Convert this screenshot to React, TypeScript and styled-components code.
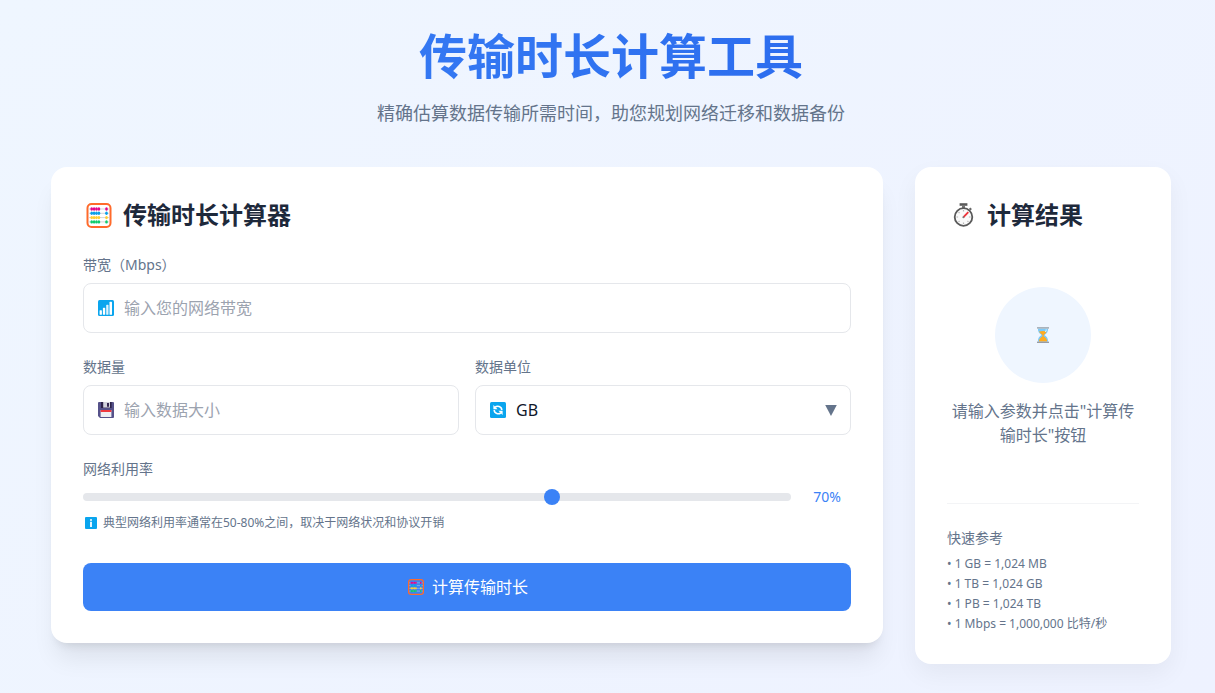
import React, { useState } from "react";
import styled, { createGlobalStyle } from "styled-components";

const GlobalStyle = createGlobalStyle`
  *, *::before, *::after { box-sizing: border-box; }
  body {
    margin: 0;
    font-family: "Noto Sans", "Noto Sans CJK SC", sans-serif;
    font-size: 16px;
    line-height: 24px;
    color: #1e293b;
  }
  h1, h2, h3, p, ul { margin: 0; padding: 0; }
  button, input, select { font: inherit; margin: 0; }
`;

const Page = styled.div`
  min-height: 100vh;
  padding: 32px 44px 24px 51px;
  background: linear-gradient(135deg, #eff6ff 0%, #eef2ff 100%);
`;

const Header = styled.header`
  text-align: center;
  margin-bottom: 40px;
`;

const Title = styled.h1`
  font-size: 48px;
  line-height: 48px;
  font-weight: 700;
  padding-bottom: 19px;
  color: transparent;
  background: linear-gradient(90deg, #3b82f6, #2563eb);
  background-clip: text;
  -webkit-background-clip: text;
`;

const Subtitle = styled.p`
  font-size: 18px;
  line-height: 28px;
  color: #64748b;
`;

const Columns = styled.main`
  display: grid;
  grid-template-columns: repeat(4, minmax(0, 1fr));
  gap: 32px;
  align-items: start;
  @media (max-width: 900px) {
    grid-template-columns: minmax(0, 1fr);
  }
`;

const Card = styled.section<{ $wide?: boolean }>`
  grid-column: ${(p) => (p.$wide ? "span 3" : "span 1")};
  padding: 32px;
  border-radius: 16px;
  background: #fff;
  box-shadow: ${(p) =>
    p.$wide
      ? "0 20px 25px -5px rgba(0,0,0,0.08), 0 8px 10px -6px rgba(0,0,0,0.1)"
      : "0 10px 25px rgba(0,0,0,0.05)"};
  @media (max-width: 900px) {
    grid-column: span 1;
  }
`;

const CardTitle = styled.h2`
  display: flex;
  align-items: center;
  gap: 8px;
  margin-bottom: 24px;
  font-size: 24px;
  line-height: 32px;
  font-weight: 700;
  svg { flex: none; }
`;

const Form = styled.form`
  display: grid;
  gap: 24px;
`;

const FieldRow = styled.div`
  display: grid;
  grid-template-columns: 1fr 1fr;
  gap: 16px;
`;

const Field = styled.div`
  display: grid;
  gap: 8px;
`;

const Label = styled.label`
  font-size: 14px;
  line-height: 20px;
  color: #64748b;
`;

const Control = styled.div`
  position: relative;
`;

const ControlIcon = styled.span<{ $end?: boolean }>`
  position: absolute;
  top: 0;
  bottom: 0;
  ${(p) => (p.$end ? "right: 14px;" : "left: 15px;")}
  display: flex;
  align-items: center;
  pointer-events: none;
`;

const TextInput = styled.input`
  display: block;
  width: 100%;
  height: 50px;
  padding: 0 16px 0 40px;
  border: 1px solid #e5e7eb;
  border-radius: 8px;
  background: #fff;
  color: #0f172a;
  outline: none;
  appearance: textfield;
  &::placeholder { color: #9ca3af; opacity: 1; }
  &:focus { border-color: #3b82f6; }
`;

const Select = styled.select`
  display: block;
  width: 100%;
  height: 50px;
  padding: 0 40px;
  border: 1px solid #e5e7eb;
  border-radius: 8px;
  background: #fff;
  color: #0f172a;
  outline: none;
  appearance: none;
`;

const SliderRow = styled.div`
  display: flex;
  align-items: center;
  gap: 12px;
`;

const Slider = styled.input`
  flex: 1;
  min-width: 0;
  height: 8px;
  border-radius: 4px;
  background: #e5e7eb;
  appearance: none;
  outline: none;
  &::-webkit-slider-thumb {
    appearance: none;
    width: 16px;
    height: 16px;
    border: 0;
    border-radius: 50%;
    background: #3b82f6;
  }
`;

const SliderValue = styled.output`
  width: 48px;
  text-align: center;
  font-size: 14px;
  line-height: 20px;
  color: #3b82f6;
`;

const Hint = styled.p`
  display: flex;
  align-items: center;
  gap: 4px;
  font-size: 12px;
  line-height: 16px;
  color: #64748b;
`;

const SubmitButton = styled.button`
  display: flex;
  align-items: center;
  justify-content: center;
  gap: 6px;
  width: 100%;
  height: 48px;
  margin-top: 8px;
  border: 0;
  border-radius: 8px;
  background: #3b82f6;
  color: #fff;
  cursor: pointer;
`;

const EmptyState = styled.div`
  display: flex;
  flex-direction: column;
  align-items: center;
  gap: 16px;
  padding: 32px 0;
  text-align: center;
  color: #64748b;
`;

const IconCircle = styled.div`
  display: flex;
  align-items: center;
  justify-content: center;
  width: 96px;
  height: 96px;
  border-radius: 50%;
  background: #eff6ff;
`;

const Reference = styled.div`
  margin-top: 24px;
  padding-top: 24px;
  border-top: 1px solid #f3f4f6;
  color: #64748b;
`;

const ReferenceTitle = styled.h3`
  margin-bottom: 8px;
  font-size: 14px;
  line-height: 20px;
  font-weight: 400;
`;

const ReferenceList = styled.ul`
  display: grid;
  gap: 4px;
  list-style: none;
  font-size: 12px;
  line-height: 16px;
`;

const BEADS = ["#e3058c", "#0a9fea", "#ffcf33", "#0fcc6c"];

const Abacus = ({ size, box }: { size: number; box: number }) => (
  <svg width={box} height={size} viewBox={`${(-(box - size) / 2) * (25 / size)} 0 ${box * (25 / size)} 25`} aria-hidden="true">
    <rect x="1" y="1" width="23" height="23" rx="4" fill="none" stroke="#ff6a2b" strokeWidth="2" />
    {BEADS.map((color, row) => {
      const y = 6 + row * 4.3;
      return (
        <g key={color}>
          <path d={`M2 ${y}H23`} stroke="#c8c8d0" strokeWidth="0.8" />
          {[5.2, 7.6, 10, 12.4, 20].map((x) => (
            <ellipse key={x} cx={x} cy={y} rx="1.35" ry="1.7" fill={color} />
          ))}
        </g>
      );
    })}
  </svg>
);

const BarsIcon = () => (
  <svg width="16" height="16" viewBox="0 0 16 16" aria-hidden="true">
    <rect width="16" height="16" rx="1.5" fill="#0aa5ee" />
    <g fill="#fff">
      <rect x="1.6" y="10.2" width="2.3" height="4.6" rx="0.6" />
      <rect x="4.9" y="7.8" width="2.3" height="7" rx="0.6" />
      <rect x="8.2" y="4.8" width="2.3" height="10" rx="0.6" fill="#dff3fd" />
      <rect x="11.5" y="1.8" width="2.5" height="13" rx="0.6" />
    </g>
  </svg>
);

const FloppyIcon = () => (
  <svg width="16" height="16" viewBox="0 0 16 16" aria-hidden="true">
    <path d="M1 0H15a1 1 0 0 1 1 1V15a1 1 0 0 1-1 1H2L0 14V1a1 1 0 0 1 1-1z" fill="#56528a" />
    <path d="M3 0H13.6V6H3z" fill="#2d2248" />
    <path d="M5.2 0H12V5.6H5.2z" fill="#d3d3dc" />
    <path d="M9 1H11V4.8H9z" fill="#35264f" />
    <path d="M2.6 8H13.4V15H2.6z" fill="#eeeef3" />
    <path d="M2.6 8H13.4V10H2.6z" fill="#f03a3f" />
  </svg>
);

const RefreshIcon = () => (
  <svg width="16" height="16" viewBox="0 0 16 16" aria-hidden="true">
    <rect width="16" height="16" rx="1.5" fill="#0aa5ee" />
    <g fill="none" stroke="#fff" strokeWidth="1.6">
      <path d="M5.2 5.2C7.2 3.4 11.6 4.2 11.8 8" />
      <path d="M10.8 10.8C8.8 12.6 4.4 11.8 4.2 8" />
    </g>
    <path d="M3.4 3V7.2H7.6z" fill="#fff" />
    <path d="M12.6 13V8.8H8.4z" fill="#fff" />
  </svg>
);

const InfoIcon = () => (
  <svg width="16" height="12" viewBox="-2 0 16 12" aria-hidden="true">
    <rect width="12" height="12" rx="1" fill="#0aa5ee" />
    <circle cx="6" cy="2.9" r="1" fill="#fff" />
    <path d="M5.1 4.8H6.9V10H5.1z" fill="#fff" />
  </svg>
);

const CaretIcon = () => (
  <svg width="12" height="11" viewBox="0 0 12 11" aria-hidden="true">
    <path d="M0.2 0H11.8L6 11z" fill="#64748b" />
  </svg>
);

const StopwatchIcon = () => (
  <svg width="32" height="26" viewBox="0 0 32 26" aria-hidden="true">
    <path d="M12.6 1.2H20.4V3.8H12.6z" fill="#5a5a5a" />
    <path d="M15 3H18V6H15z" fill="#777" />
    <path d="M22.6 6.2L24.2 7.8" stroke="#666" strokeWidth="2" />
    <circle cx="16.5" cy="15" r="8.8" fill="#fafafa" stroke="#5a5a5a" strokeWidth="1.8" />
    <g stroke="#b5b5b5" strokeWidth="1.2">
      <path d="M16.5 8V9.6M16.5 20.4V22M9.5 15H11.1M21.9 15H23.5" />
      <path d="M11.6 10.1L12.5 11M11.6 19.9L12.5 19M21.4 19.9L20.5 19" />
    </g>
    <path d="M16.5 15.2L21.3 10.2" stroke="#f0333a" strokeWidth="1.8" />
    <circle cx="16.4" cy="15.2" r="1" fill="#777" />
  </svg>
);

const HourglassIcon = () => (
  <svg width="12" height="16" viewBox="0 0 12 16" aria-hidden="true">
    <path d="M0.9 1.5H11.1C11.1 5 9.8 6.2 7.5 8C9.8 9.8 11.1 11 11.1 14.5H0.9C0.9 11 2.2 9.8 4.5 8C2.2 6.2 0.9 5 0.9 1.5z" fill="#7ccaf8" />
    <path d="M2 4.6L6 4L9.6 4.4C9 6.4 7.6 7 6.7 8V9.6C8.6 10.6 10 12 10.2 14.5H1.8C2 12 3.6 10.6 5.4 9.6V8C4.5 7 2.8 6.3 2 4.6z" fill="#ffac20" />
    <path d="M9.2 2.4C9.2 3.6 9 4.3 8.4 5" fill="none" stroke="#e7f7ff" strokeWidth="1" />
    <path d="M0 0H12V1.7H0z" fill="#aab3bc" />
    <path d="M0 14.6H12V16H0z" fill="#969ba5" />
  </svg>
);

export default function App() {
  const [usage, setUsage] = useState(70);

  return (
    <>
      <GlobalStyle />
      <Page>
        <Header>
          <Title>传输时长计算工具</Title>
          <Subtitle>精确估算数据传输所需时间，助您规划网络迁移和数据备份</Subtitle>
        </Header>
        <Columns>
          <Card $wide>
            <CardTitle>
              <Abacus size={25} box={32} />
              传输时长计算器
            </CardTitle>
            <Form onSubmit={(e) => e.preventDefault()}>
              <Field>
                <Label htmlFor="bandwidth">带宽（Mbps）</Label>
                <Control>
                  <ControlIcon><BarsIcon /></ControlIcon>
                  <TextInput id="bandwidth" type="number" placeholder="输入您的网络带宽" />
                </Control>
              </Field>
              <FieldRow>
                <Field>
                  <Label htmlFor="amount">数据量</Label>
                  <Control>
                    <ControlIcon><FloppyIcon /></ControlIcon>
                    <TextInput id="amount" type="number" placeholder="输入数据大小" />
                  </Control>
                </Field>
                <Field>
                  <Label htmlFor="unit">数据单位</Label>
                  <Control>
                    <Select id="unit" defaultValue="GB">
                      <option>MB</option>
                      <option>GB</option>
                      <option>TB</option>
                      <option>PB</option>
                    </Select>
                    <ControlIcon><RefreshIcon /></ControlIcon>
                    <ControlIcon $end><CaretIcon /></ControlIcon>
                  </Control>
                </Field>
              </FieldRow>
              <Field>
                <Label htmlFor="usage">网络利用率</Label>
                <SliderRow>
                  <Slider
                    id="usage"
                    type="range"
                    min={10}
                    max={100}
                    value={usage}
                    onChange={(e) => setUsage(Number(e.target.value))}
                  />
                  <SliderValue htmlFor="usage">{usage}%</SliderValue>
                </SliderRow>
                <Hint>
                  <InfoIcon />
                  典型网络利用率通常在50-80%之间，取决于网络状况和协议开销
                </Hint>
              </Field>
              <SubmitButton type="submit">
                <Abacus size={16} box={20} />
                计算传输时长
              </SubmitButton>
            </Form>
          </Card>
          <Card>
            <CardTitle>
              <StopwatchIcon />
              计算结果
            </CardTitle>
            <EmptyState>
              <IconCircle><HourglassIcon /></IconCircle>
              <p>请输入参数并点击"计算传输时长"按钮</p>
            </EmptyState>
            <Reference>
              <ReferenceTitle>快速参考</ReferenceTitle>
              <ReferenceList>
                <li>• 1 GB = 1,024 MB</li>
                <li>• 1 TB = 1,024 GB</li>
                <li>• 1 PB = 1,024 TB</li>
                <li>• 1 Mbps = 1,000,000 比特/秒</li>
              </ReferenceList>
            </Reference>
          </Card>
        </Columns>
      </Page>
    </>
  );
}
